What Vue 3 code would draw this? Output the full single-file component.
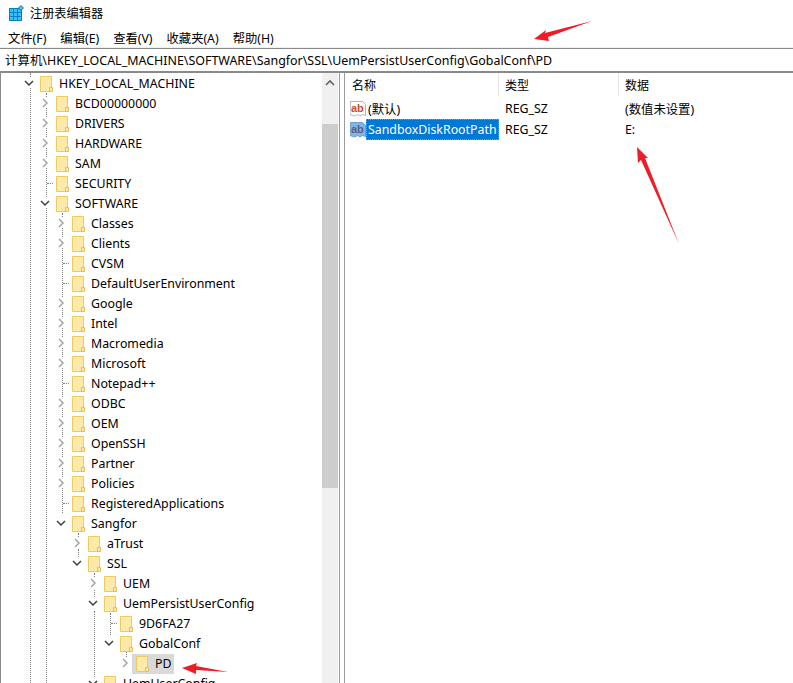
<script setup>
const rows = [
  [0, 'HKEY_LOCAL_MACHINE', 'open'],
  [1, 'BCD00000000', 'closed'],
  [1, 'DRIVERS', 'closed'],
  [1, 'HARDWARE', 'closed'],
  [1, 'SAM', 'closed'],
  [1, 'SECURITY', 'leaf'],
  [1, 'SOFTWARE', 'open'],
  [2, 'Classes', 'closed'],
  [2, 'Clients', 'closed'],
  [2, 'CVSM', 'leaf'],
  [2, 'DefaultUserEnvironment', 'leaf'],
  [2, 'Google', 'closed'],
  [2, 'Intel', 'closed'],
  [2, 'Macromedia', 'closed'],
  [2, 'Microsoft', 'closed'],
  [2, 'Notepad++', 'leaf'],
  [2, 'ODBC', 'closed'],
  [2, 'OEM', 'closed'],
  [2, 'OpenSSH', 'closed'],
  [2, 'Partner', 'closed'],
  [2, 'Policies', 'closed'],
  [2, 'RegisteredApplications', 'leaf'],
  [2, 'Sangfor', 'open'],
  [3, 'aTrust', 'closed'],
  [3, 'SSL', 'open'],
  [4, 'UEM', 'closed'],
  [4, 'UemPersistUserConfig', 'open'],
  [5, '9D6FA27', 'leaf'],
  [5, 'GobalConf', 'open'],
  [6, 'PD', 'closed'],
  [4, 'UemUserConfig', 'open'],
].map(([level, name, state]) => ({ level, name, state }))
const menus = ['文件(F)', '编辑(E)', '查看(V)', '收藏夹(A)', '帮助(H)']

// Tree connector lines: [x, y1, y2] in page pixels; the tree pane starts at y = 73.
const vertical = [
  [30, 73, 683], [46, 93, 683], [62, 213, 513], [78, 533, 537], [78, 549, 557],
  [94, 573, 577], [94, 590, 597], [94, 611, 683], [110, 613, 635], [126, 651, 657],
]
const guides = vertical.map(([x, y1, y2]) => ({
  key: `${x}-${y1}`,
  style: { left: x + 'px', top: y1 - 73 + 'px', height: y2 - y1 + 'px' },
}))
const stubs = rows
  .map((r, i) => ({ r, i }))
  .filter(({ r }) => r.state === 'leaf')
  .map(({ r, i }) => ({
    key: r.name,
    style: { left: 31 + 16 * r.level + 'px', top: 10 + 20 * i + 'px' },
  }))
</script>

<template>
  <div class="window">
    <div class="title">
      <svg class="appicon" width="16" height="16" viewBox="0 0 16 16">
        <rect x="0" y="3" width="13" height="13" fill="#0c7fc4"/>
        <g fill="#35c1f1">
          <rect x="1" y="4" width="3" height="3"/><rect x="5" y="4" width="3" height="3"/><rect x="9" y="4" width="3" height="3"/>
          <rect x="1" y="8" width="3" height="3"/><rect x="5" y="8" width="3" height="3"/><rect x="9" y="8" width="3" height="3"/>
          <rect x="1" y="12" width="3" height="3"/><rect x="5" y="12" width="3" height="3"/><rect x="9" y="12" width="3" height="3"/>
        </g>
        <path d="M12 0l3 3-3 3-3-3z" fill="#1a86c8"/>
        <path d="M12 1.500l1.500 1.500-1.500 1.500-1.500-1.500z" fill="#6fd3f5"/>
      </svg>
      <span>注册表编辑器</span>
    </div>
    <div class="menu">
      <span v-for="m in menus" :key="m">{{ m }}</span>
    </div>
    <div class="address">计算机\HKEY_LOCAL_MACHINE\SOFTWARE\Sangfor\SSL\UemPersistUserConfig\GobalConf\PD</div>
    <div class="panes">
      <div class="treepane">
        <div class="tree">
          <i v-for="g in guides" :key="g.key" class="guide" :style="g.style"></i>
          <i v-for="s in stubs" :key="s.key" class="stub" :style="s.style"></i>
          <div v-for="r in rows" :key="r.name" class="row" :class="'lv' + r.level">
            <svg v-if="r.state === 'open'" class="exp" width="10" height="10" viewBox="0 0 10 10">
              <path d="M1 3l4 4 4-4" fill="none" stroke="#404040" stroke-width="1.5"/>
            </svg>
            <svg v-else-if="r.state === 'closed'" class="exp" width="10" height="10" viewBox="0 0 10 10">
              <path d="M3 1l4 4-4 4" fill="none" stroke="#a6a6a6" stroke-width="1.5"/>
            </svg>
            <span v-else class="spacer"></span>
            <span class="item" :class="{ selected: r.name === 'PD' }">
              <svg class="folder" width="13" height="16" viewBox="0 0 13 16">
                <path d="M.5.5h11v15H.5z" fill="#fdeaa8" stroke="#efca5e"/>
                <path d="M9.500 11.500h3v4h-3z" fill="#fde9a4" stroke="#e8bf4e"/>
              </svg>
              <span class="name">{{ r.name }}</span>
            </span>
          </div>
        </div>
        <div class="scrollbar">
          <svg class="up" width="10" height="8" viewBox="0 0 10 8"><path d="M1 6l4-4 4 4" fill="none" stroke="#606060" stroke-width="1.6"/></svg>
          <div class="thumb"></div>
        </div>
      </div>
      <div class="divider"></div>
      <div class="list">
        <div class="head">
          <span class="h1">名称</span><span class="h2">类型</span><span class="h3">数据</span>
        </div>
        <div class="vrow">
          <span class="c1">
            <svg class="ab" width="16" height="16" viewBox="0 0 16 16">
              <path d="M.5.5h12l3 3v11l-3-1-2.500 1.500-2.500-1.500-3 1.500-4.500-1.500z" fill="#fff" stroke="#b5b5b5"/>
              <text x="1" y="11" class="abt" fill="#d8462a">ab</text>
            </svg>
            <span class="vn">(默认)</span>
          </span>
          <span class="c2">REG_SZ</span><span class="c3">(数值未设置)</span>
        </div>
        <div class="vrow">
          <span class="c1">
            <svg class="ab" width="16" height="16" viewBox="0 0 16 16">
              <path d="M.5.5h12l3 3v11l-3-1-2.500 1.500-2.500-1.500-3 1.500-4.500-1.500z" fill="#82b4e4" stroke="#6a9fd0"/>
              <text x="1" y="11" class="abt" fill="#5c5c88">ab</text>
            </svg>
            <span class="vn sel">SandboxDiskRootPath</span>
          </span>
          <span class="c2">REG_SZ</span><span class="c3">E:</span>
        </div>
      </div>
    </div>
    <svg class="arrows" width="793" height="683" viewBox="0 0 793 683">
      <path d="M592 21L545 33 546 30 534 39 549 41 548 37z" fill="#ee1c25"/>
      <path d="M679 244L645 158 648 158 637 147 638 163 641 160z" fill="#ee1c25"/>
      <path d="M228 672L196 666 197 663 182 668 196 674 196 670z" fill="#ee1c25"/>
    </svg>
  </div>
</template>

<style scoped>
.window {
  position: relative;
  width: 793px;
  height: 683px;
  overflow: hidden;
  background: #fff;
  display: flex;
  flex-direction: column;
  font-family: "Noto Sans", "Noto Sans CJK SC", sans-serif;
  font-size: 12.35px;
  color: #000;
}
.title {
  height: 27px;
  padding-bottom: 1px;
  box-sizing: border-box;
  display: flex;
  align-items: center;
  gap: 5px;
  padding-left: 9px;
  font-family: "Noto Sans CJK SC", sans-serif;
  font-size: 12.2px;
}
.menu {
  height: 21px;
  box-sizing: border-box;
  padding: 1px 0 0 8px;
  display: flex;
  align-items: center;
  gap: 14px;
  font-size: 12.3px;
  border-bottom: 1px solid #f0f0f0;
}
.address {
  height: 22px;
  line-height: 23px;
  font-size: 12.45px;
  border-top: 1px solid #8a8a8a;
  border-bottom: 2px solid #8a8a8a;
  padding-left: 5px;
  white-space: nowrap;
}
.panes {
  flex: 1;
  min-height: 0;
  display: flex;
}
.treepane {
  width: 338px;
  flex: none;
  display: flex;
  overflow: hidden;
  box-shadow: inset 1px 0 0 #8c8c8c;
}
.tree {
  position: relative;
  width: 322px;
  padding-top: 1px;
  box-sizing: border-box;
  overflow: hidden;
}
.guide {
  position: absolute;
  width: 0;
  border-left: 1px dotted #808080;
}
.stub {
  position: absolute;
  width: 6px;
  height: 0;
  border-top: 1px dotted #808080;
}
.row {
  position: relative;
  height: 20px;
  display: flex;
  align-items: center;
  white-space: nowrap;
}
.lv0 { padding-left: 24px; }
.lv1 { padding-left: 40px; }
.lv2 { padding-left: 56px; }
.lv3 { padding-left: 72px; }
.lv4 { padding-left: 88px; }
.lv5 { padding-left: 104px; }
.lv6 { padding-left: 120px; }
.exp {
  width: 10px;
  height: 10px;
  margin: -2px 6px 0 0;
  flex: none;
  background: #fff;
}
.spacer {
  width: 16px;
  flex: none;
}
.item {
  display: flex;
  align-items: center;
  height: 20px;
}
.selected {
  background: #d9d9d9;
  margin-left: -4px;
  padding: 0 3px 0 4px;
}
.folder {
  margin-right: 6px;
  flex: none;
}
.name {
  margin-top: -2px;
}
.scrollbar {
  width: 16px;
  background: #f0f0f0;
  flex: none;
}
.up {
  display: block;
  margin: 6px auto 0;
}
.thumb {
  margin-top: 37px;
  height: 364px;
  background: #cdcdcd;
}
.divider {
  width: 6px;
  margin-left: 1px;
  box-sizing: border-box;
  flex: none;
  border-left: 1px solid #9a9aa0;
  border-right: 1px solid #9a9aa0;
}
.list {
  flex: 1;
  min-width: 0;
}
.head {
  height: 25px;
  padding-bottom: 2px;
  box-sizing: border-box;
  display: flex;
  font-family: "Noto Sans CJK SC", sans-serif;
  font-size: 12px;
  line-height: 23px;
}
.h1 {
  width: 154px;
  padding-left: 7px;
  box-sizing: border-box;
  border-right: 1px solid #e5e5e5;
}
.h2 {
  width: 120px;
  padding-left: 6px;
  box-sizing: border-box;
  border-right: 1px solid #e5e5e5;
}
.h3 { padding-left: 6px; }
.vrow {
  height: 21px;
  display: flex;
  align-items: center;
}
.c1 {
  width: 154px;
  padding-left: 5px;
  box-sizing: border-box;
  display: flex;
  align-items: center;
  flex: none;
}
.c2 {
  width: 120px;
  padding-left: 6px;
  box-sizing: border-box;
  flex: none;
}
.c3 { padding-left: 6px; }
.ab { flex: none; }
.abt {
  font-family: "Liberation Sans", sans-serif;
  font-size: 11px;
  font-weight: 700;
}
.vn {
  padding: 0 1px 0 2px;
  white-space: nowrap;
}
.sel {
  background: #0078d7;
  color: #fff;
  outline: 1px dotted #e08a2c;
  outline-offset: -1px;
  height: 21px;
  line-height: 21px;
  padding-right: 2px;
}
.arrows {
  position: absolute;
  left: 0;
  top: 0;
  pointer-events: none;
}
</style>
